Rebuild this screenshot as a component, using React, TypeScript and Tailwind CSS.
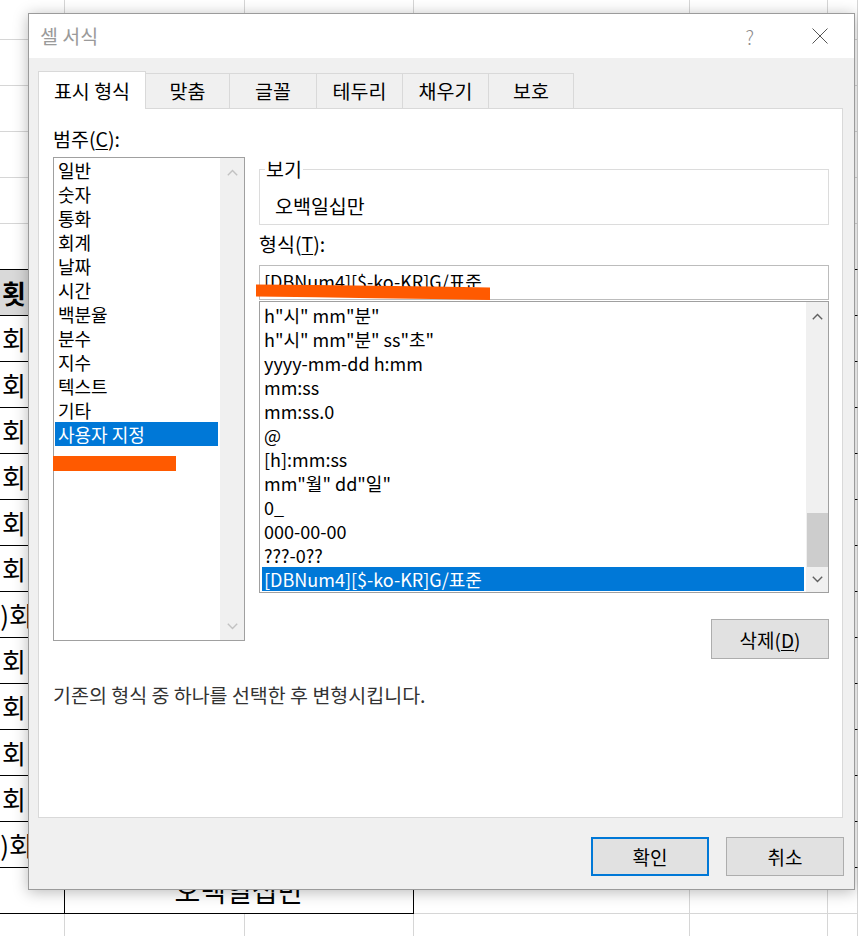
import React from "react";

const colW = ["w-[65px]", "w-[180px]", "w-[169px]", "w-[276px]", "w-[138px]", "w-[30px]"];

const sideCells = [
  { text: "횟", head: true },
  { text: "회" },
  { text: "회" },
  { text: "회" },
  { text: "회" },
  { text: "회" },
  { text: "회" },
  { text: ")회", shift: true },
  { text: "회" },
  { text: "회" },
  { text: "회" },
  { text: "회" },
  { text: ")회", shift: true },
];

const categories = [
  "일반",
  "숫자",
  "통화",
  "회계",
  "날짜",
  "시간",
  "백분율",
  "분수",
  "지수",
  "텍스트",
  "기타",
  "사용자 지정",
];

const formats = [
  'h"시" mm"분"',
  'h"시" mm"분" ss"초"',
  "yyyy-mm-dd h:mm",
  "mm:ss",
  "mm:ss.0",
  "@",
  "[h]:mm:ss",
  'mm"월" dd"일"',
  "0_",
  "000-00-00",
  "???-0??",
  "[DBNum4][$-ko-KR]G/표준",
];

const tabs = [
  { label: "맞춤", w: "w-[84px]" },
  { label: "글꼴", w: "w-[87px]" },
  { label: "테두리", w: "w-[86px]" },
  { label: "채우기", w: "w-[86px]" },
  { label: "보호", w: "w-[85px]" },
];

function PlainRow({ h, edge }: { h: string; edge?: boolean }) {
  return (
    <div className={`flex ${h}`}>
      {colW.map((w, i) => (
        <div
          key={i}
          className={`${w} shrink-0 border-r border-b border-[#d6d6d6] ${
            edge && (i === 0 || i === 5) ? "border-b-black" : ""
          }`}
        />
      ))}
    </div>
  );
}

function Sheet() {
  return (
    <div className="flex flex-col">
      <PlainRow h="h-[40px]" />
      <PlainRow h="h-[46px]" />
      <PlainRow h="h-[46px]" />
      <PlainRow h="h-[46px]" />
      <PlainRow h="h-[46px]" />
      <PlainRow h="h-[46px]" edge />
      {sideCells.map((c, r) => (
        <div key={r} className="flex h-[46px]">
          <div
            className={`w-[65px] shrink-0 border-r border-b border-[#d6d6d6] border-b-black text-right text-[26px] leading-[45px] whitespace-nowrap ${
              c.head ? "bg-[#d9d9d9] font-bold" : ""
            } ${c.shift ? "pr-[31px]" : "pr-[38px]"}`}
          >
            {c.text}
          </div>
          {colW.slice(1).map((w, i) => (
            <div
              key={i}
              className={`${w} shrink-0 border-r border-b border-[#d6d6d6] ${i === 4 ? "border-b-black" : ""}`}
            />
          ))}
        </div>
      ))}
      <div className="flex h-[46px]">
        <div className="w-[65px] shrink-0 border-r border-b border-black" />
        <div className="w-[349px] shrink-0 border-r border-b border-black text-center text-[28px] leading-[45px]">
          오백일십만
        </div>
        <div className="w-[276px] shrink-0 border-r border-b border-[#d6d6d6]" />
        <div className="w-[138px] shrink-0 border-r border-b border-[#d6d6d6]" />
        <div className="w-[30px] shrink-0 border-r border-b border-[#d6d6d6]" />
      </div>
      <PlainRow h="h-[46px]" />
    </div>
  );
}

function Chevron({ up, color }: { up?: boolean; color: string }) {
  return (
    <svg width="11" height="7" viewBox="0 0 11 7" fill="none">
      <path
        d={up ? "M0.8 6.2L5.5 1.5L10.2 6.2" : "M0.8 0.8L5.5 5.5L10.2 0.8"}
        stroke={color}
        strokeWidth="1.4"
      />
    </svg>
  );
}

function Button({ children, focus, w }: { children: React.ReactNode; focus?: boolean; w: string }) {
  return (
    <div
      className={`${w} flex items-center justify-center bg-[#e1e1e1] text-[19px] leading-none ${
        focus ? "border-2 border-[#0078d7]" : "border border-[#adadad]"
      }`}
    >
      {children}
    </div>
  );
}

function Dialog() {
  return (
    <div className="absolute left-[28px] top-[13px] w-[827px] h-[877px] flex flex-col border border-[#9b9b9b] bg-[#f0f0f0] shadow-[0_2px_14px_rgba(0,0,0,0.28)]">
      {/* title bar */}
      <div className="h-[44px] shrink-0 bg-white flex items-center pl-[11px] pr-[26px]">
        <span className="text-[19.5px] leading-none text-[#9a9a9a]">셀 서식</span>
        <span className="ml-auto text-[19px] leading-none text-[#8c8c8c] font-light">?</span>
        <svg className="ml-[58px]" width="16" height="16" viewBox="0 0 16 16" fill="none">
          <path d="M0.5 0.5L15.5 15.5M15.5 0.5L0.5 15.5" stroke="#555" strokeWidth="1" />
        </svg>
      </div>

      <div className="flex-1 flex flex-col pl-[9px] pr-[11px] pt-[13px]">
        {/* tabs */}
        <div className="relative z-10 flex items-end h-[38px] -mb-px text-[19.5px]">
          <div className="w-[108px] h-[38px] bg-white border-t border-l border-r border-[#d9d9d9] flex items-center justify-center leading-none">
            표시 형식
          </div>
          {tabs.map((t) => (
            <div
              key={t.label}
              className={`${t.w} h-[35px] mb-px border-t border-r border-[#d9d9d9] flex items-center justify-center leading-none`}
            >
              {t.label}
            </div>
          ))}
        </div>

        {/* pane */}
        <div className="h-[710px] shrink-0 bg-white border border-[#d9d9d9] pl-[14px] pr-[13px] pt-[19px] text-[19.5px]">
          <div className="flex items-start gap-[14px]">
            {/* category column */}
            <div className="w-[192px] shrink-0">
              <div className="h-[22px] leading-[22px]">
                범주(<span className="underline underline-offset-2">C</span>):
              </div>
              <div className="relative mt-[7px] h-[484px] border border-[#a0a0a0] flex text-[18px]">
                <div className="flex-1 pl-[1px] pr-[2px]">
                  {categories.map((c) => (
                    <div
                      key={c}
                      className={`h-[24px] leading-[24px] pl-[3px] whitespace-nowrap ${
                        c === "사용자 지정" ? "bg-[#0078d7] text-white" : ""
                      }`}
                    >
                      {c}
                    </div>
                  ))}
                </div>
                <div className="w-[24px] bg-[#f0f0f0] flex flex-col">
                  <div className="h-[28px] flex items-center justify-center">
                    <Chevron up color="#c2c2c2" />
                  </div>
                  <div className="flex-1" />
                  <div className="h-[28px] flex items-center justify-center">
                    <Chevron color="#c2c2c2" />
                  </div>
                </div>
                <div className="absolute left-[-1px] top-[298px] w-[123px] h-[15px] bg-[#ff5a00]" />
              </div>
            </div>

            {/* format column */}
            <div className="w-[570px] shrink-0 flex flex-col">
              <fieldset className="mt-[30px] border border-[#dcdcdc] pl-[5px]">
                <legend className="px-[1px] h-[22px] leading-[22px]">보기</legend>
                <div className="pt-[15px] pb-[7px] pl-[10px] leading-[22px]">오백일십만</div>
              </fieldset>
              <div className="mt-[8px] h-[22px] leading-[22px]">
                형식(<span className="underline underline-offset-2">T</span>):
              </div>
              <div className="relative mt-[10px] h-[35px] border border-[#bcbcbc] pl-[4px] pt-[3px] text-[18px] leading-[24px]">
                [DBNum4][$-ko-KR]G/표준
                <svg
                  className="absolute left-[-4px] top-[17px]"
                  width="234"
                  height="19"
                  viewBox="0 0 234 19"
                >
                  <path d="M0 1.5 Q120 2.5 234 4.5 L234 17 Q120 15 0 13.5 Z" fill="#ff5a00" />
                </svg>
              </div>
              <div className="mt-[1px] h-[292px] border border-[#a0a0a0] flex text-[18px]">
                <div className="flex-1 pl-[2px] pr-[2px] pt-[1px]">
                  {formats.map((f, i) => (
                    <div
                      key={f}
                      className={`h-[24px] leading-[24px] pl-[2px] whitespace-nowrap ${
                        i === formats.length - 1 ? "bg-[#0078d7] text-white" : ""
                      }`}
                    >
                      {f}
                    </div>
                  ))}
                </div>
                <div className="w-[22px] bg-[#f0f0f0] flex flex-col">
                  <div className="h-[28px] flex items-center justify-center">
                    <Chevron up color="#606060" />
                  </div>
                  <div className="flex-1 flex flex-col">
                    <div className="mt-auto h-[54px] ml-px bg-[#cdcdcd]" />
                  </div>
                  <div className="h-[25px] flex items-center justify-center">
                    <Chevron color="#606060" />
                  </div>
                </div>
              </div>
              <div className="mt-[26px] self-end flex h-[40px]">
                <Button w="w-[118px]">
                  삭제(<span className="underline underline-offset-2">D</span>)
                </Button>
              </div>
            </div>
          </div>
          <div className="mt-[25px] h-[22px] leading-[22px] text-[#333]">
            기존의 형식 중 하나를 선택한 후 변형시킵니다.
          </div>
        </div>

        {/* footer buttons */}
        <div className="flex justify-end gap-[17px] pt-[19px] -mr-px">
          <div className="flex h-[39px]">
            <Button w="w-[118px]" focus>
              확인
            </Button>
          </div>
          <div className="flex h-[39px]">
            <Button w="w-[118px]">취소</Button>
          </div>
        </div>
      </div>
    </div>
  );
}

export default function App() {
  return (
    <div className="relative w-[858px] h-[936px] overflow-hidden bg-white text-black font-['Noto_Sans_CJK_KR','Noto_Sans',sans-serif]">
      <Sheet />
      <Dialog />
    </div>
  );
}
